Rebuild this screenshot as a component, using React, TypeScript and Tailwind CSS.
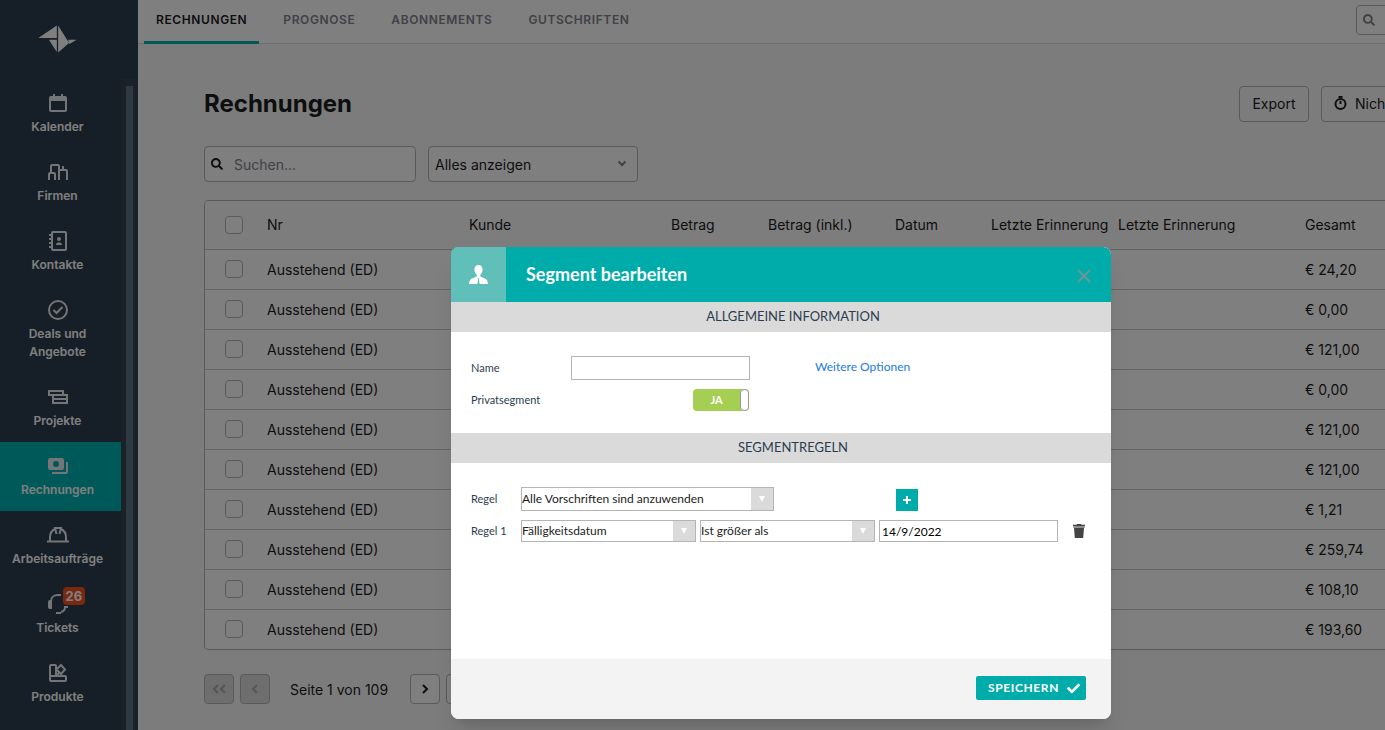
import type { ReactNode } from "react";
import { FaCheck, FaSearch } from "react-icons/fa";

type NavItem = {
  label: string;
  icon: ReactNode;
  active?: boolean;
  badge?: number;
};

const navItems: NavItem[] = [
  {
    label: "Kalender",
    icon: (
      <>
        <rect x="2" y="4" width="16" height="14" rx="1" />
        <path d="M2 5.500h16M2 7h16" />
        <path d="M6 1v3M14 1v3" />
      </>
    ),
  },
  {
    label: "Firmen",
    icon: (
      <>
        <path d="M1 18v-6a1 1 0 0 1 1-1h4a1 1 0 0 1 1 1v6" />
        <path d="M3 11V4a1 1 0 0 1 1-1h6a1 1 0 0 1 1 1v14" />
        <path d="M11 8h7a1 1 0 0 1 1 1v9M15 8V4" />
      </>
    ),
  },
  {
    label: "Kontakte",
    icon: (
      <>
        <rect x="4" y="1" width="14" height="18" rx="1" />
        <path d="M1 4h2M1 8h2M1 12h2M1 16h2" />
        <circle cx="11" cy="8" r="2" fill="currentColor" stroke="none" />
        <path d="M8 14c0-2 1.500-2.500 3-2.500s3 .5 3 2.500z" fill="currentColor" stroke="none" />
      </>
    ),
  },
  {
    label: "Deals und Angebote",
    icon: (
      <>
        <circle cx="10" cy="10" r="9" />
        <path d="M5.500 10l3 3 6-6" />
      </>
    ),
  },
  {
    label: "Projekte",
    icon: (
      <>
        <rect x="1" y="4" width="14" height="4" />
        <rect x="5" y="8" width="14" height="4" />
        <rect x="5" y="12" width="14" height="4" />
      </>
    ),
  },
  {
    label: "Rechnungen",
    active: true,
    icon: (
      <>
        <path
          d="M2 2h12a2 2 0 0 1 2 2v8a2 2 0 0 1-2 2H2a2 2 0 0 1-2-2V4a2 2 0 0 1 2-2zM8 5a3 3 0 1 0 0 6 3 3 0 0 0 0-6z"
          fill="currentColor"
          fillRule="evenodd"
          stroke="none"
        />
        <path d="M19 6v10a1 1 0 0 1-1 1H4" />
      </>
    ),
  },
  {
    label: "Arbeitsaufträge",
    icon: (
      <>
        <path d="M-1 16.500h22" />
        <path d="M2 16v-4c0-4 2-6.500 5-8M18 16v-4c0-4-2-6.500-5-8" />
        <path d="M8.500 9L7 3h6l-1.500 6" />
      </>
    ),
  },
  {
    label: "Tickets",
    badge: 26,
    icon: (
      <>
        <path d="M1 8a1 1 0 0 1 1-1h1v7H2a1 1 0 0 1-1-1z" />
        <path d="M3 7c0-3.500 3-6 7-6h3" />
        <path d="M20 13h-3c0 3-1 4.500-4 5M8 19h5" />
      </>
    ),
  },
  {
    label: "Produkte",
    icon: (
      <>
        <path d="M2 13V3a1 1 0 0 1 1-1h4a1 1 0 0 1 1 1v10" />
        <rect x="2" y="13" width="16" height="5" rx="1" />
        <path d="M9 6l4-4 4 4.500-4 4.500-4-4M8 13l4-4" />
      </>
    ),
  },
];

const tabs = ["Rechnungen", "Prognose", "Abonnements", "Gutschriften"];

const columns = [
  { label: "Nr", width: "w-[202px]" },
  { label: "Kunde", width: "w-[202px]" },
  { label: "Betrag", width: "w-[97px]" },
  { label: "Betrag (inkl.)", width: "w-[127px]" },
  { label: "Datum", width: "w-[96px]" },
  { label: "Letzte Erinnerung", width: "w-[127px]" },
  { label: "Letzte Erinnerung", width: "w-[187px]" },
  { label: "Gesamt", width: "w-auto" },
];

const totals = [
  "€ 24,20",
  "€ 0,00",
  "€ 121,00",
  "€ 0,00",
  "€ 121,00",
  "€ 121,00",
  "€ 1,21",
  "€ 259,74",
  "€ 108,10",
  "€ 193,60",
];

function Sidebar() {
  return (
    <aside className="flex w-[138px] shrink-0 flex-col bg-[#2d3d4e] text-white">
      <div className="flex h-[79px] w-[115px] shrink-0 items-center justify-center pb-0.5">
        <svg width="39" height="28" viewBox="114 74 118 84" fill="currentColor" aria-label="Logo">
          <path d="M115 113L171 75v38zM147 118h24v37zM175 75l33 53-33 29zM205 118h26l-22 13z" />
        </svg>
      </div>
      <div className="flex min-h-0 flex-1">
        <nav className="w-[121px] shrink-0">
          {navItems.map((item) => (
            <a
              key={item.label}
              href="#"
              className={`flex flex-col items-center pt-3.5 pr-1.5 pb-3 ${item.active ? "bg-[#00b2b2]" : ""}`}
            >
              <span className="relative">
                <svg
                  width="20"
                  height="20"
                  viewBox="0 0 20 20"
                  fill="none"
                  stroke="currentColor"
                  strokeWidth="2"
                  className="overflow-visible text-[#e8eaec]"
                >
                  {item.icon}
                </svg>
                {item.badge && (
                  <span className="absolute -top-[7px] left-[15px] h-[18px] rounded bg-[#f4511e] px-[3px] text-[13px] leading-[18px] font-bold">
                    {item.badge}
                  </span>
                )}
              </span>
              <span className="mt-[5px] max-w-24 text-center text-[12px] leading-[18px] font-semibold">
                {item.label}
              </span>
            </a>
          ))}
        </nav>
        <div className="flex-1 bg-[#344252] px-[5px] pt-[7px]">
          <div className="h-full bg-[#5f7285]" />
        </div>
      </div>
    </aside>
  );
}

function TopBar() {
  return (
    <header className="flex h-11 items-start justify-between border-b border-[#dcdcdc] bg-white">
      <nav className="ml-1.5 flex gap-3">
        {tabs.map((tab, i) => (
          <a
            key={tab}
            href="#"
            className={`h-11 px-3 text-[12px] leading-10 font-semibold tracking-wider uppercase ${
              i === 0 ? "border-b-3 border-[#00b2b2] text-[#1a1c20]" : "text-[#82828c]"
            }`}
          >
            {tab}
          </a>
        ))}
      </nav>
      <button
        aria-label="Suche"
        className="mt-[5px] -mr-1 flex h-[30px] w-[33px] items-center rounded border border-[#b4b4b8] pl-1.5 text-[#82828c]"
      >
        <FaSearch size={12} />
      </button>
    </header>
  );
}

function Checkbox({ label }: { label: string }) {
  return (
    <input
      type="checkbox"
      aria-label={label}
      className="block size-[18px] appearance-none rounded border border-[#b4b4b8] bg-white"
    />
  );
}

function InvoiceTable() {
  return (
    <div className="mt-[18px] -mr-1 overflow-hidden rounded border border-[#b4b4b8] bg-white">
      <table className="w-full table-fixed border-collapse text-left text-[14px] text-[#1a1c20]">
        <thead>
          <tr className="h-12 bg-[#fafafa]">
            <th className="w-[54px] pl-5">
              <Checkbox label="Alle auswählen" />
            </th>
            {columns.map((col, i) => (
              <th key={i} className={`${col.width} px-2 font-normal whitespace-nowrap`}>
                {col.label}
              </th>
            ))}
          </tr>
        </thead>
        <tbody>
          {totals.map((total, i) => (
            <tr key={i} className="h-10 border-t border-[#c8c8cc]">
              <td className="pl-5">
                <Checkbox label={`Rechnung ${i + 1}`} />
              </td>
              <td className="px-2">Ausstehend (ED)</td>
              <td colSpan={6} />
              <td className="px-2 whitespace-nowrap">{total}</td>
            </tr>
          ))}
        </tbody>
      </table>
    </div>
  );
}

function PageButton({ label, disabled, children }: { label: string; disabled?: boolean; children: ReactNode }) {
  return (
    <button
      aria-label={label}
      disabled={disabled}
      className={`flex size-[30px] items-center justify-center rounded border ${
        disabled ? "border-[#b4b4b8] bg-[#dcdcdc] text-[#aaaab0]" : "border-[#b4b4b8] bg-white text-[#1a1c20]"
      }`}
    >
      <svg width="16" height="16" viewBox="0 0 16 16" fill="none" stroke="currentColor" strokeWidth="2">
        {children}
      </svg>
    </button>
  );
}

function InvoicePage() {
  return (
    <main className="flex-1 bg-[#f9f9f9] pl-[66px] text-[#1a1c20]">
      <div className="mt-[42px] flex items-center justify-between">
        <h1 className="text-2xl leading-9 font-bold">Rechnungen</h1>
        <div className="-mr-2 flex gap-3 text-[14px]">
          <button className="h-9 w-[70px] rounded border border-[#b4b4b8] pb-0.5">Export</button>
          <button className="flex h-9 w-18 items-center gap-2 rounded border border-[#b4b4b8] pb-0.5 pl-3 whitespace-nowrap">
            <svg
              width="13"
              height="14"
              viewBox="0 0 13 14"
              fill="none"
              stroke="currentColor"
              strokeWidth="2"
              className="shrink-0"
            >
              <circle cx="6.500" cy="8" r="5" />
              <path d="M4.500 1h4M6.500 5v3" />
            </svg>
            Nich
          </button>
        </div>
      </div>

      <div className="mt-6 flex gap-3 text-[14px]">
        <div className="relative w-[212px]">
          <FaSearch size={12} className="absolute top-3 left-[7px]" />
          <input
            aria-label="Suchen"
            placeholder="Suchen..."
            className="h-9 w-full rounded border border-[#b4b4b8] bg-white pl-[29px] placeholder:text-[#82828c]"
          />
        </div>
        <div className="relative w-[210px]">
          <select
            aria-label="Filter"
            className="h-9 w-full appearance-none rounded border border-[#b4b4b8] bg-white pl-1.5"
          >
            <option>Alles anzeigen</option>
          </select>
          <svg
            width="10"
            height="7"
            viewBox="0 0 10 7"
            fill="none"
            stroke="currentColor"
            strokeWidth="2"
            className="pointer-events-none absolute top-3.5 right-[11px] text-[#82828c]"
          >
            <path d="M1.500 1.500L5 5l3.500-3.500" />
          </svg>
        </div>
      </div>

      <InvoiceTable />

      <div className="mt-6 flex items-center gap-1.5 text-[14px]">
        <PageButton label="Erste Seite" disabled>
          <path d="M7 4L3 8l4 4M14 4l-4 4 4 4" />
        </PageButton>
        <PageButton label="Vorherige Seite" disabled>
          <path d="M10 4L6 8l4 4" />
        </PageButton>
        <span className="mr-4 ml-3.5">Seite 1 von 109</span>
        <PageButton label="Nächste Seite">
          <path d="M6 4l4 4-4 4" />
        </PageButton>
        <PageButton label="Letzte Seite">
          <path d="M2 4l4 4-4 4M9 4l4 4-4 4" />
        </PageButton>
      </div>
    </main>
  );
}

function SectionTitle({ children }: { children: ReactNode }) {
  return (
    <h3 className="bg-[#dadada] pb-0.5 pl-6 text-center text-[13px] leading-7 text-[#2d3d4e] uppercase">
      {children}
    </h3>
  );
}

function RuleSelect({ id, label, value, className }: { id: string; label?: string; value: string; className: string }) {
  return (
    <div className={`relative shrink-0 ${className}`}>
      <select
        id={id}
        aria-label={label}
        className="block h-full w-full appearance-none border border-[#b4b4b4] bg-white text-[12px] text-[#222]"
      >
        <option>{value}</option>
      </select>
      <span className="pointer-events-none absolute inset-y-px right-px flex w-[22px] items-center justify-center bg-[#dadada]">
        <svg width="6" height="6" viewBox="0 0 6 6" fill="white">
          <path d="M0 0h6L3 6z" />
        </svg>
      </span>
    </div>
  );
}

function SegmentDialog() {
  return (
    <div
      role="dialog"
      aria-labelledby="dialog-title"
      className="w-[660px] overflow-hidden rounded-lg bg-white font-['Lato',sans-serif] text-[11px] text-[#2d3d4e] shadow-xl"
    >
      <div className="flex h-[55px] items-center bg-[#00acaa] text-white">
        <div className="flex h-full w-[55px] items-center justify-center bg-[#61bfba]">
          <svg width="19" height="19" viewBox="0 0 19 19" fill="currentColor">
            <path d="M9.500 0C12 0 13.600 1.800 13.600 4.500c0 2.200-1 4.200-2.300 5.300v1.600l5.200 2.300c1.500.7 2.200 2 2.500 5.300h-8.300L9.800 14.500l.7-1.300h-2l.7 1.300L8.300 19H0c.3-3.300 1-4.600 2.500-5.300l5.200-2.300V9.800C6.400 8.700 5.400 6.700 5.400 4.500 5.400 1.800 7 0 9.500 0z" />
          </svg>
        </div>
        <h2 id="dialog-title" className="ml-5 flex-1 text-[18px] font-bold">
          Segment bearbeiten
        </h2>
        <button aria-label="Schließen" className="mt-0.5 mr-5 text-[#6f9597]">
          <svg width="14" height="14" viewBox="0 0 14 14" fill="none" stroke="currentColor" strokeWidth="2">
            <path d="M1 1l12 12M13 1L1 13" />
          </svg>
        </button>
      </div>

      <SectionTitle>Allgemeine Information</SectionTitle>
      <div className="h-[101px] px-5 pt-6">
        <div className="flex items-center">
          <label htmlFor="name" className="w-[100px]">
            Name
          </label>
          <input id="name" className="h-6 w-[179px] border border-[#b4b4b4] px-1" />
          <a href="#" className="ml-[65px] pb-0.5 text-[12px] text-[#1a7ae6]">
            Weitere Optionen
          </a>
        </div>
        <div className="mt-[9px] flex w-[278px] items-center justify-between">
          <span>Privatsegment</span>
          <button
            role="switch"
            aria-checked="true"
            aria-label="Privatsegment"
            className="flex h-[22px] w-14 items-center rounded bg-[#a5cf52] font-bold text-white"
          >
            <span className="flex-1">JA</span>
            <span className="h-full w-[9px] rounded border border-[#999] bg-white" />
          </button>
        </div>
      </div>

      <SectionTitle>Segmentregeln</SectionTitle>
      <div className="h-[196px] px-5 pt-6">
        <div className="flex items-center">
          <label htmlFor="rule-mode" className="w-[50px]">
            Regel
          </label>
          <RuleSelect id="rule-mode" value="Alle Vorschriften sind anzuwenden" className="h-6 w-[253px]" />
          <button
            aria-label="Regel hinzufügen"
            className="ml-[122px] flex size-[22px] items-center justify-center self-end bg-[#00acaa] text-white"
          >
            <svg width="8" height="8" viewBox="0 0 8 8" stroke="currentColor" strokeWidth="2">
              <path d="M4 0v8M0 4h8" />
            </svg>
          </button>
        </div>
        <div className="mt-[9px] flex items-center">
          <label htmlFor="rule-field" className="w-[50px]">
            Regel 1
          </label>
          <RuleSelect id="rule-field" value="Fälligkeitsdatum" className="h-[22px] w-[175px]" />
          <RuleSelect id="rule-operator" label="Operator" value="Ist größer als" className="ml-1 h-[22px] w-[175px]" />
          <input
            aria-label="Wert"
            defaultValue="14/9/2022"
            className="ml-1 h-[22px] w-[179px] border border-[#b4b4b4] px-0.5 text-[12px] text-black"
          />
          <button aria-label="Regel löschen" className="ml-[15px] text-[#444]">
            <svg width="12" height="14" viewBox="0 0 12 14" fill="currentColor">
              <path d="M0 .7h3.500L4 0h4l.5.7H12V2H0zM1 4h10l-.8 10H1.800z" />
              <path d="M.3 2h11.400v2H.3z" opacity=".6" />
            </svg>
          </button>
        </div>
      </div>

      <div className="flex h-[60px] items-center justify-end bg-[#f3f3f3] pr-[25px] pb-0.5">
        <button className="flex h-6 items-center gap-2 rounded-xs bg-[#00acaa] pr-1.5 pl-3 text-[12px] font-bold tracking-wider text-white uppercase">
          Speichern
          <FaCheck size={13} />
        </button>
      </div>
    </div>
  );
}

export default function App() {
  return (
    <div className="relative flex h-screen overflow-hidden font-['Inter',sans-serif]">
      <Sidebar />
      <div className="flex min-w-0 flex-1 flex-col">
        <TopBar />
        <InvoicePage />
      </div>
      <div className="absolute inset-0 flex items-start justify-center bg-black/50 pt-[247px] pl-[177px]">
        <SegmentDialog />
      </div>
    </div>
  );
}
